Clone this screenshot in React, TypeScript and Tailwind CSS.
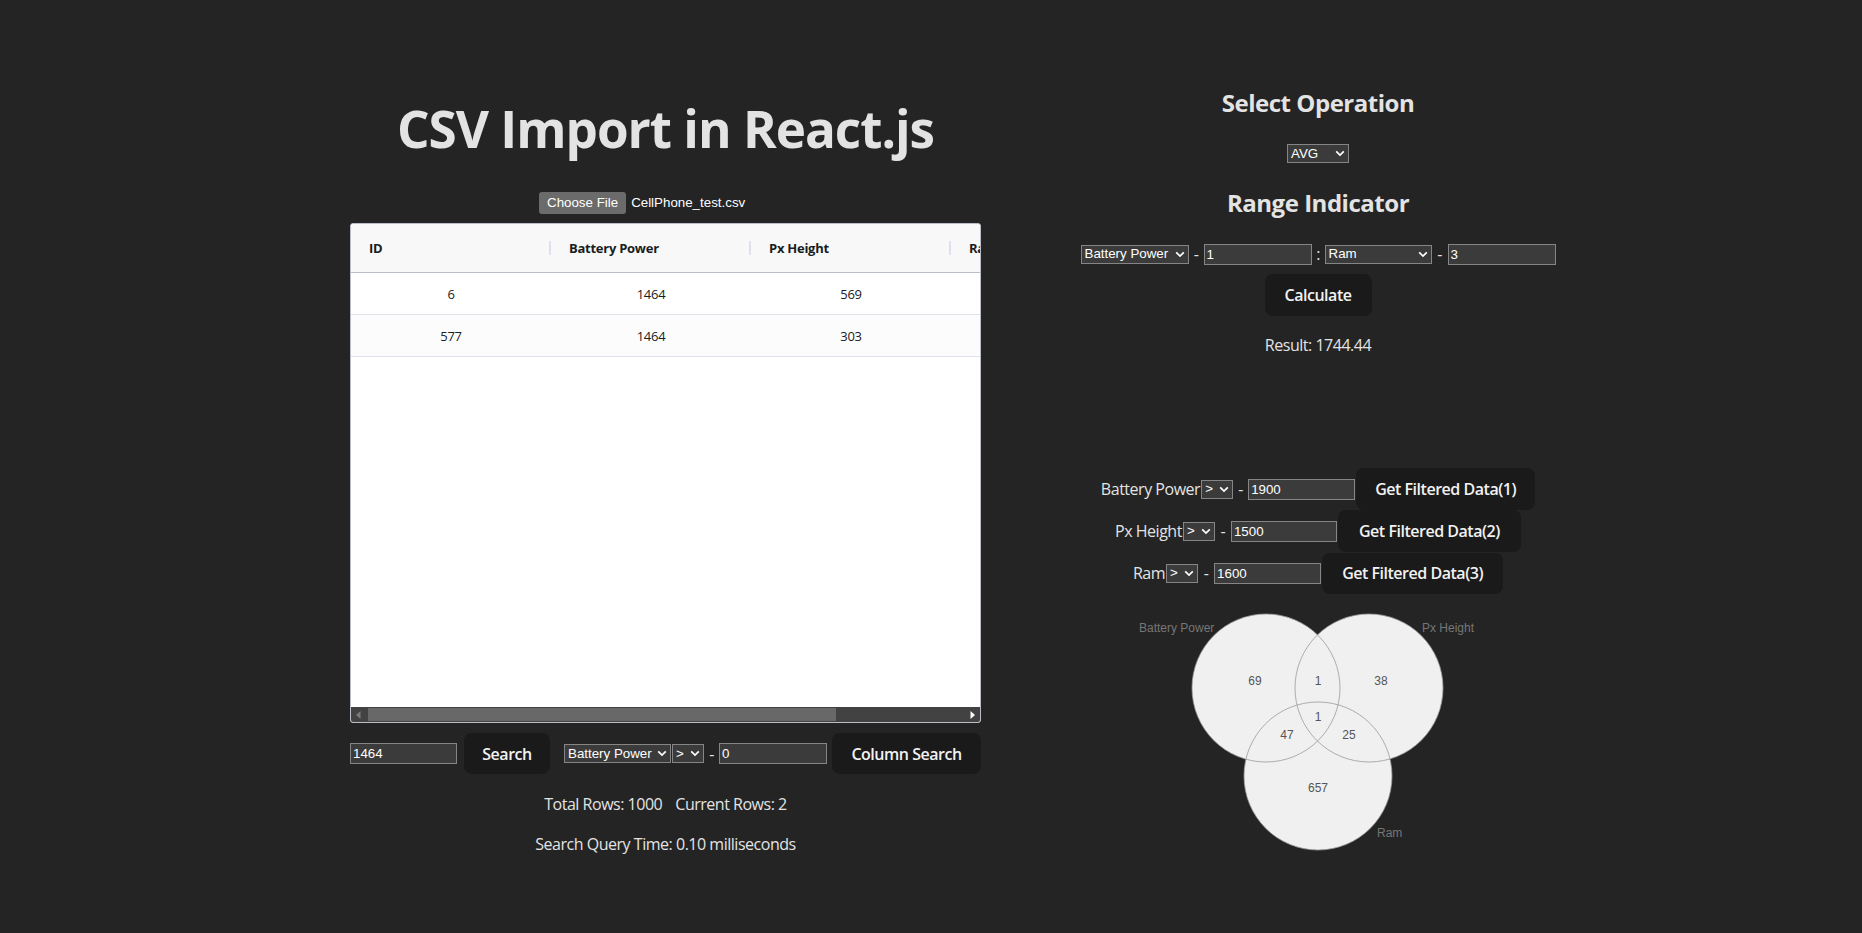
import React from 'react'

const columns = ['ID', 'Battery Power', 'Px Height', 'Ram']
const rows = [
  ['6', '1464', '569'],
  ['577', '1464', '303'],
]

function Chevron() {
  return (
    <svg width="10" height="7" viewBox="0 0 10 7" className="shrink-0">
      <path d="M1.2 1.3 L5 5.1 L8.8 1.3" stroke="#ffffff" strokeWidth="1.7" fill="none" />
    </svg>
  )
}

function FakeSelect({ value, className }: { value: string; className: string }) {
  return (
    <span
      className={`inline-flex h-[19px] shrink-0 items-center justify-between border border-[#858585] bg-[#3b3b3b] pl-[3px] pr-[3px] font-['Liberation_Sans',Arial,sans-serif] text-[13.33px] leading-none tracking-normal text-white ${className}`}
    >
      <span className="whitespace-nowrap">{value}</span>
      <Chevron />
    </span>
  )
}

function TextBox({ value, className }: { value: string; className: string }) {
  return (
    <input
      readOnly
      value={value}
      className={`h-[21px] shrink-0 border border-[#858585] bg-[#3b3b3b] px-[2px] font-['Liberation_Sans',Arial,sans-serif] text-[13.33px] tracking-normal text-white outline-none ${className}`}
    />
  )
}

function Btn({ label, className }: { label: string; className: string }) {
  return (
    <button
      className={`flex shrink-0 items-center justify-center rounded-[8px] border border-transparent bg-[#1a1a1a] text-[16px] font-semibold whitespace-nowrap text-[#f2f2f2] ${className}`}
    >
      {label}
    </button>
  )
}

function Dash({ ch = '-', className }: { ch?: string; className: string }) {
  return <span className={`shrink-0 text-center text-[16px] ${className}`}>{ch}</span>
}

function DataTable() {
  return (
    <div className="flex h-[500px] w-[631px] flex-col overflow-hidden rounded-[3px] border border-[#babfc7] bg-white font-['Open_Sans',sans-serif] text-[13px] tracking-[-0.02em] text-[#181d1f]">
      {/* header */}
      <div className="flex h-[49px] shrink-0 border-b border-[#babfc7] bg-[#f8f8f8] font-bold">
        {columns.map((c) => (
          <div key={c} className="relative flex w-[200px] shrink-0 items-center pt-[1px] pl-[18px]">
            {c}
            <span className="absolute top-[17px] right-0 h-[14px] w-[2px] bg-[#dde2eb]" />
          </div>
        ))}
      </div>
      {rows.map((r, i) => (
        <div
          key={i}
          className={`flex h-[42px] shrink-0 border-b border-[#dde2eb] ${i % 2 === 1 ? 'bg-[#fcfcfc]' : 'bg-white'}`}
        >
          {r.map((v, j) => (
            <div key={j} className="flex w-[200px] shrink-0 items-center justify-center pt-[3px]">
              {v}
            </div>
          ))}
        </div>
      ))}
      <div className="flex-1" />
      {/* horizontal scrollbar */}
      <div className="flex h-[15px] shrink-0 bg-[#424242]">
        <div className="flex w-[15px] items-center justify-center">
          <svg width="5" height="8" viewBox="0 0 5 8">
            <path d="M4.5 0 L0 4 L4.5 8 Z" fill="#7a7a7a" />
          </svg>
        </div>
        <div className="flex flex-1 items-stretch py-[1px]">
          <div className="ml-[2px] w-[468px] bg-[#686868]" />
        </div>
        <div className="flex w-[15px] items-center justify-center">
          <svg width="5" height="8" viewBox="0 0 5 8">
            <path d="M0.5 0 L5 4 L0.5 8 Z" fill="#ffffff" />
          </svg>
        </div>
      </div>
    </div>
  )
}

function Venn() {
  const circles = [
    { cx: 148, cy: 88 },
    { cx: 251, cy: 88 },
    { cx: 200, cy: 176 },
  ]
  const counts = [
    { x: 137, y: 81, t: '69' },
    { x: 200, y: 81, t: '1' },
    { x: 263, y: 81, t: '38' },
    { x: 200, y: 117, t: '1' },
    { x: 169, y: 135, t: '47' },
    { x: 231, y: 135, t: '25' },
    { x: 200, y: 188, t: '657' },
  ]
  return (
    <svg
      width="400"
      height="260"
      viewBox="0 0 400 260"
      className="mt-[6px] shrink-0 font-['Liberation_Sans',Arial,sans-serif] tracking-normal"
    >
      {circles.map((c, i) => (
        <circle key={`f${i}`} cx={c.cx} cy={c.cy} r="74" fill="#f0f0f0" />
      ))}
      {circles.map((c, i) => (
        <circle key={`s${i}`} cx={c.cx} cy={c.cy} r="74" fill="none" stroke="#9a9a9a" strokeWidth="0.8" />
      ))}
      <text x="21" y="32" fontSize="12" fill="#767676">Battery Power</text>
      <text x="304" y="32" fontSize="12" fill="#767676">Px Height</text>
      <text x="259" y="237" fontSize="12" fill="#767676">Ram</text>
      {counts.map((n, i) => (
        <text key={i} x={n.x} y={n.y} fontSize="12" fill="#555555" textAnchor="middle" dominantBaseline="central">
          {n.t}
        </text>
      ))}
    </svg>
  )
}

export default function App() {
  return (
    <div className="min-h-screen w-full bg-[#242424] font-['Open_Sans',sans-serif] tracking-[-0.03em] text-[#e3e3e3]">
      <div className="flex pl-[350px]">
        {/* Left: CSV import + table */}
        <div className="flex w-[631px] shrink-0 flex-col items-center pt-[100px]">
          <h1 className="h-[56px] text-[51.2px] leading-[56px] font-bold tracking-[-1px] whitespace-nowrap text-[#e3e3e3]">
            CSV Import in React.js
          </h1>
          <div className="mt-[36px] flex h-[22px] w-[253px] items-center font-['Liberation_Sans',Arial,sans-serif] text-[13.33px] tracking-normal text-white">
            <span className="flex h-[22px] items-center rounded-[3px] bg-[#6b6b6b] px-[8px]">Choose File</span>
            <span className="ml-[5px]">CellPhone_test.csv</span>
          </div>
          <div className="mt-[9px]">
            <DataTable />
          </div>
          <div className="mt-[10px] flex h-[41px] w-[631px] items-center">
            <TextBox value="1464" className="w-[107px]" />
            <Btn label="Search" className="ml-[7px] h-[41px] w-[86px]" />
            <FakeSelect value="Battery Power" className="ml-[14px] w-[107px]" />
            <FakeSelect value=">" className="ml-[1px] w-[32px]" />
            <Dash className="w-[15px]" />
            <TextBox value="0" className="w-[108px]" />
            <Btn label="Column Search" className="ml-[5px] h-[41px] w-[149px]" />
          </div>
          <div className="mt-[18px] flex h-[24px] items-center text-[16px] leading-[24px]">
            <span>Total Rows: 1000</span>
            <span className="ml-[13px]">Current Rows: 2</span>
          </div>
          <div className="mt-[16px] h-[24px] text-[16px] leading-[24px]">Search Query Time: 0.10 milliseconds</div>
        </div>

        {/* Right: operations + filters + venn */}
        <div className="ml-[57px] flex w-[560px] shrink-0 flex-col items-center pt-[87px]">
          <h2 className="h-[32px] text-[24px] leading-[32px] font-bold">Select Operation</h2>
          <FakeSelect value="AVG" className="mt-[25px] w-[62px]" />
          <h2 className="mt-[24px] h-[32px] text-[24px] leading-[32px] font-bold">Range Indicator</h2>
          <div className="mt-[24px] flex h-[22px] w-[475px] items-center">
            <FakeSelect value="Battery Power" className="w-[108px]" />
            <Dash className="w-[15px]" />
            <TextBox value="1" className="w-[108px]" />
            <Dash ch=":" className="w-[13px]" />
            <FakeSelect value="Ram" className="w-[107px]" />
            <Dash className="w-[16px]" />
            <TextBox value="3" className="w-[108px]" />
          </div>
          <Btn label="Calculate" className="mt-[9px] h-[42px] w-[107px]" />
          <div className="mt-[17px] h-[24px] text-[16px] leading-[24px]">Result: 1744.44</div>

          <div className="mt-[111px] flex flex-col items-center">
            <div className="flex h-[42px] items-center">
              <span className="text-[16px]">Battery Power</span>
              <FakeSelect value=">" className="ml-[1px] w-[32px]" />
              <Dash className="w-[15px]" />
              <TextBox value="1900" className="w-[107px]" />
              <Btn label="Get Filtered Data(1)" className="ml-[1px] h-[42px] w-[179px]" />
            </div>
            <div className="flex h-[42px] items-center">
              <span className="text-[16px]">Px Height</span>
              <FakeSelect value=">" className="ml-[1px] w-[32px]" />
              <Dash className="w-[16px]" />
              <TextBox value="1500" className="w-[106px]" />
              <Btn label="Get Filtered Data(2)" className="ml-[1px] h-[42px] w-[183px]" />
            </div>
            <div className="flex h-[42px] items-center">
              <span className="text-[16px]">Ram</span>
              <FakeSelect value=">" className="ml-[1px] w-[32px]" />
              <Dash className="w-[16px]" />
              <TextBox value="1600" className="w-[107px]" />
              <Btn label="Get Filtered Data(3)" className="ml-[1px] h-[41px] w-[181px]" />
            </div>
          </div>

          <Venn />
        </div>
      </div>
    </div>
  )
}
